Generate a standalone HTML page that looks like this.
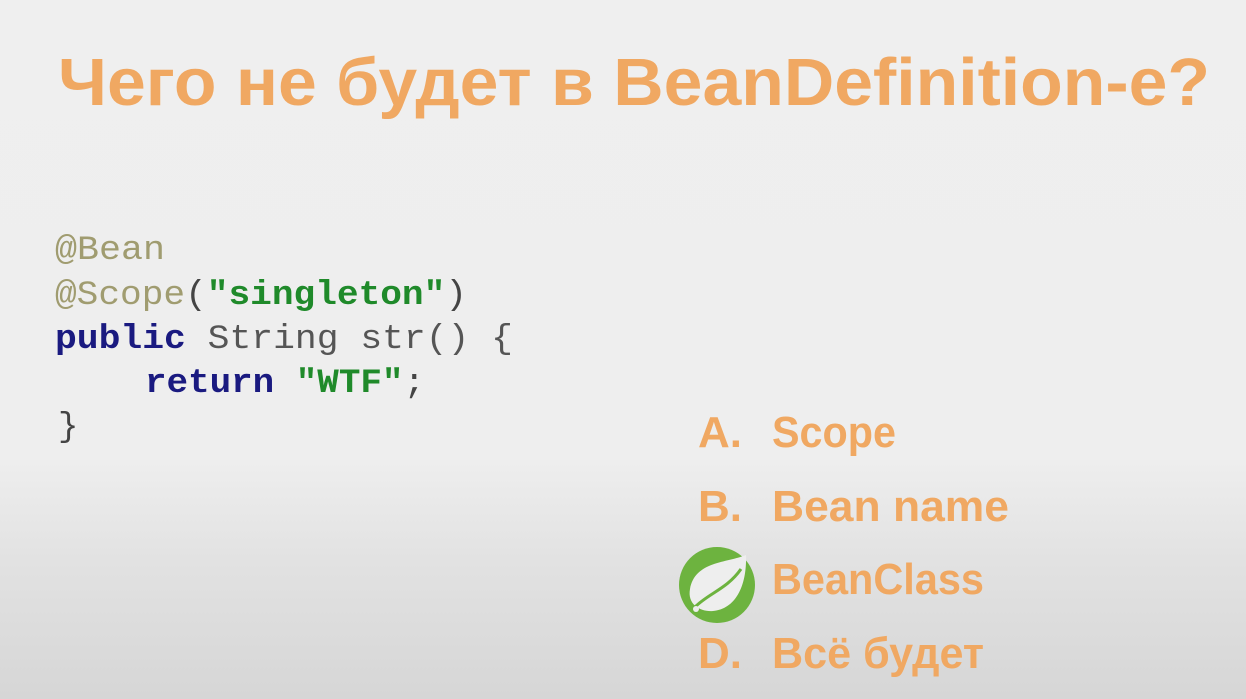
<!DOCTYPE html>
<html><head><meta charset="utf-8"><style>
html,body{margin:0;padding:0;width:1246px;height:699px;overflow:hidden}
body{background:linear-gradient(#efefef 0px,#eeeeee 460px,#e2e2e2 560px,#d6d6d6 699px)}
svg{display:block}
.t{font-family:"Liberation Sans","DejaVu Sans",sans-serif;font-weight:bold;fill:#f0a862}
.m{font-family:"Liberation Mono",monospace;font-size:34px}
</style></head><body>
<svg width="1246" height="699" viewBox="0 0 1246 699">
<text class="t" x="58" y="105" font-size="67" textLength="1152" lengthAdjust="spacingAndGlyphs">Чего не будет в BeanDefinition-е?</text>
<g class="m">
<text x="55" y="259" fill="#a09c70" textLength="110" lengthAdjust="spacingAndGlyphs">@Bean</text>
<text x="55" y="304" textLength="412" lengthAdjust="spacingAndGlyphs"><tspan fill="#a09c70">@Scope</tspan><tspan fill="#444">(</tspan><tspan fill="#1f8a2a" font-weight="bold">"singleton"</tspan><tspan fill="#444">)</tspan></text>
<text x="55" y="348" textLength="458" lengthAdjust="spacingAndGlyphs"><tspan fill="#1a1a80" font-weight="bold">public</tspan><tspan fill="#555"> String str() {</tspan></text>
<text x="145" y="392" textLength="280" lengthAdjust="spacingAndGlyphs"><tspan fill="#1a1a80" font-weight="bold">return</tspan><tspan fill="#444"> </tspan><tspan fill="#1f8a2a" font-weight="bold">"WTF"</tspan><tspan fill="#444">;</tspan></text>
<text x="58" y="436" fill="#444">}</text>
</g>
<text class="t" x="698" y="447" font-size="44">A.</text>
<text class="t" x="772" y="447" font-size="44" textLength="124" lengthAdjust="spacingAndGlyphs">Scope</text>
<text class="t" x="698" y="521" font-size="44">B.</text>
<text class="t" x="772" y="521" font-size="44" textLength="237" lengthAdjust="spacingAndGlyphs">Bean name</text>
<text class="t" x="772" y="594" font-size="44" textLength="212" lengthAdjust="spacingAndGlyphs">BeanClass</text>
<text class="t" x="698" y="668" font-size="44">D.</text>
<text class="t" x="772" y="668" font-size="44" textLength="212" lengthAdjust="spacingAndGlyphs">Всё будет</text>
<g transform="translate(717,585)">
<circle r="38" fill="#6db33f"/>
<path d="M29,-30 C10,-22 -22,-24 -27,4 C-30,20 -16,27 -4,26 C18,24 30,2 29,-30 Z" fill="#eeeeee"/>
<path d="M-22,22 C-8,8 10,4 24,-16" stroke="#6db33f" stroke-width="3" fill="none"/>
<circle cx="-21" cy="24" r="3" fill="#eeeeee"/>
</g>
</svg>
</body></html>
